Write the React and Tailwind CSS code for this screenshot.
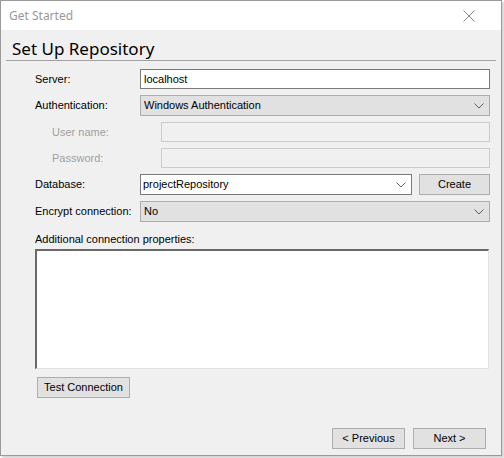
import React from 'react';

function Chevron() {
  return (
    <svg width="10" height="6" viewBox="0 0 10 6" className="shrink-0">
      <path d="M0.5 0.5 L5 5 L9.5 0.5" fill="none" stroke="#606060" strokeWidth="1" />
    </svg>
  );
}

function Label({ children, disabled, indent }) {
  return (
    <div
      className={`shrink-0 ${indent ? 'w-[108px] pl-[17px]' : 'w-[105px]'} ${
        disabled ? 'text-[#a0a0a0]' : 'text-black'
      }`}
    >
      {children}
    </div>
  );
}

function WinButton({ children, className = '' }) {
  return (
    <div
      className={`flex items-center justify-center h-[21px] bg-[#e1e1e1] border border-[#adadad] text-black ${className}`}
    >
      {children}
    </div>
  );
}

export default function App() {
  return (
    <div
      className="w-[504px] h-[458px] bg-white overflow-hidden"
      style={{ fontFamily: '"Liberation Sans", Arial, sans-serif' }}
    >
      <div className="w-[502px] h-[456px] flex flex-col border border-[#9a9a9a] shadow-[2px_2px_2px_rgba(0,0,0,0.18)]">
        {/* title bar */}
        <div className="h-[29px] bg-white flex items-center justify-between pl-[8px] pr-[26px] shrink-0">
          <span
            className="text-[12px] text-[#999999]"
            style={{ fontFamily: '"Noto Sans", "Open Sans", sans-serif' }}
          >
            Get Started
          </span>
          <svg width="12" height="12" viewBox="0 0 12 12">
            <path d="M0.5 0.5 L11.5 11.5 M11.5 0.5 L0.5 11.5" stroke="#8a8a8a" strokeWidth="1" />
          </svg>
        </div>

        <div className="flex-1 bg-[#f0f0f0] flex flex-col text-[11px]">
          {/* heading */}
          <div className="mx-[5px] border-b border-[#a0a0a0] h-[31px] flex items-end pb-[3px] pl-[6px]">
            <span
              className="text-[17px] leading-none text-black"
              style={{ fontFamily: '"Noto Sans", "Open Sans", sans-serif' }}
            >
              Set Up Repository
            </span>
          </div>

          <div className="pl-[34px] pr-[11px] flex flex-col">
            {/* server */}
            <div className="flex items-center mt-[8px]">
              <Label>Server:</Label>
              <div className="flex-1 h-[20px] bg-white border border-[#7a7a7a] flex items-center px-[3px]">
                localhost
              </div>
            </div>

            {/* auth */}
            <div className="flex items-center mt-[6px]">
              <Label>Authentication:</Label>
              <div className="flex-1 h-[21px] bg-[#e1e1e1] border border-[#adadad] flex items-center justify-between pl-[3px] pr-[5px]">
                <span>Windows Authentication</span>
                <Chevron />
              </div>
            </div>

            {/* user name */}
            <div className="flex items-center mt-[6px]">
              <Label disabled indent>User name:</Label>
              <div className="flex-1 h-[20px] ml-[18px] bg-[#f0f0f0] border border-[#cccccc]" />
            </div>

            {/* password */}
            <div className="flex items-center mt-[6px]">
              <Label disabled indent>Password:</Label>
              <div className="flex-1 h-[20px] ml-[18px] bg-[#f0f0f0] border border-[#cccccc]" />
            </div>

            {/* database */}
            <div className="flex items-center mt-[6px]">
              <Label>Database:</Label>
              <div className="w-[272px] h-[21px] bg-white border border-[#7a7a7a] flex items-center justify-between pl-[2px] pr-[5px]">
                <span>projectRepository</span>
                <Chevron />
              </div>
              <WinButton className="ml-[7px] flex-1">Create</WinButton>
            </div>

            {/* encrypt */}
            <div className="flex items-center mt-[6px]">
              <Label>Encrypt connection:</Label>
              <div className="flex-1 h-[21px] bg-[#e1e1e1] border border-[#adadad] flex items-center justify-between pl-[3px] pr-[5px]">
                <span>No</span>
                <Chevron />
              </div>
            </div>

            <div className="mt-[12px] leading-none">Additional connection properties:</div>

            <div className="mt-[4px] mr-[1px] h-[120px] bg-white border-t-2 border-l-2 border-[#696969] border-r border-b border-r-[#e3e3e3] border-b-[#e3e3e3]" />

            <WinButton className="mt-[8px] ml-[2px] w-[93px]">Test Connection</WinButton>

            <div className="flex justify-end gap-[8px] mt-[30px] mr-[4px]">
              <WinButton className="w-[73px]">&lt; Previous</WinButton>
              <WinButton className="w-[73px]">Next &gt;</WinButton>
            </div>
          </div>
        </div>
      </div>
    </div>
  );
}
